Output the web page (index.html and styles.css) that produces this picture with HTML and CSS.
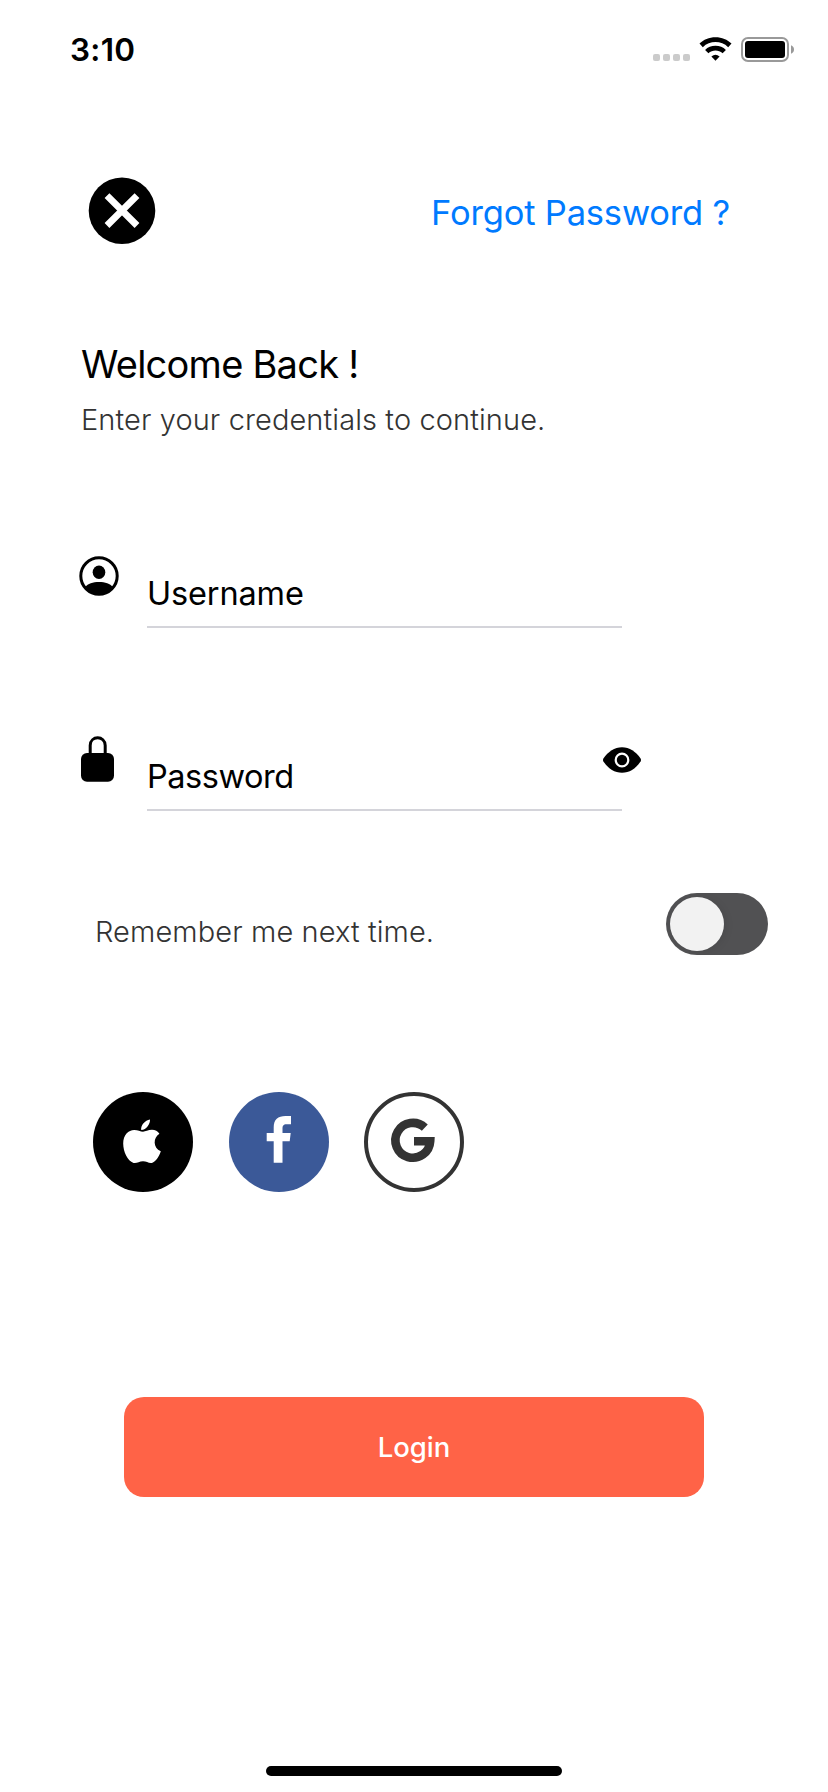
FILE: index.html
```html
<!DOCTYPE html>
<html lang="en">
<head>
<meta charset="utf-8">
<title>Login</title>
<link rel="stylesheet" href="styles.css">
</head>
<body>
<main class="screen">
  <header class="status">
    <span class="time">3:10</span>
    <svg class="status-icons" width="142" height="28" viewBox="0 0 142 28">
      <g fill="#cbcbcb"><rect y="18" width="7" height="7" rx="2"/><rect x="10" y="18" width="7" height="7" rx="2"/><rect x="20" y="18" width="7" height="7" rx="2"/><rect x="30" y="18" width="7" height="7" rx="2"/></g>
      <path d="M62.5 24.7L58.4 20.6Q62.5 17 66.6 20.6Z"/>
      <path d="M62.5 9.8C66.600 9.800 70.200 11.300 72.900 13.900L69.600 17.200C65.600 13.600 59.400 13.600 55.400 17.200L52.100 13.900C54.800 11.300 58.400 9.800 62.500 9.800Z"/>
      <path d="M62.500 1.200C68.900 1.200 74.400 3.600 78.500 7.600L75.200 11.200C68.200 4.400 56.800 4.400 49.800 11.200L46.500 7.600C50.600 3.600 56.100 1.200 62.500 1.200Z"/>
      <rect x="89" y="2" width="46" height="23" rx="6" fill="none" stroke="#999" stroke-width="2"/>
      <rect x="92" y="5" width="40" height="17" rx="3"/>
      <path d="M138 9.300Q141 10.500 141 13.500T138 17.700Z" fill="#999"/>
    </svg>
  </header>

  <nav class="topbar">
    <svg width="68" height="68" viewBox="0 0 68 68"><circle cx="34" cy="33.700" r="33.300"/><path d="M19 18.700L49 48.500M49 18.700L19 48.500" stroke="#fff" stroke-width="6.800"/></svg>
    <a class="forgot">Forgot Password ?</a>
  </nav>

  <section class="intro">
    <h1 class="title">Welcome Back !</h1>
    <p class="subtitle">Enter your credentials to continue.</p>
  </section>

  <form class="form">
    <div class="field">
      <svg class="user-icon" width="40" height="40" viewBox="0 0 40 40"><circle cx="20" cy="20" r="18.200" fill="none" stroke="#000" stroke-width="3"/><ellipse cx="20" cy="16.200" rx="6.300" ry="6.800"/><path d="M6.500 30.800C8.500 28 14 26 20 26S31.500 28 33.500 30.800C31 35 25.500 38.500 20 38.500S9 35 6.500 30.800Z"/></svg>
      <label class="input username">Username</label>
    </div>
    <div class="field">
      <svg class="lock-icon" width="34" height="47" viewBox="0 0 34 47"><rect y="17" width="33" height="28.700" rx="6"/><path d="M9.200 18V9.500C9.200 -.7 24.200 -.7 24.200 9.500V18" fill="none" stroke="#000" stroke-width="3"/></svg>
      <label class="input password">Password</label>
      <svg class="eye" width="38" height="26" viewBox="0 0 38 26"><path d="M.4 11.500C5.200 4.500 11.500.2 19 .2S32.800 4.500 37.600 11.500Q38.400 13 37.600 14.400C32.800 21.500 26.500 25.800 19 25.800S5.200 21.500.4 14.400Q-.4 13 .4 11.500Z"/><circle cx="19" cy="13" r="6.300" fill="none" stroke="#fff" stroke-width="2.200"/></svg>
    </div>
    <div class="remember">
      <span class="remember-text">Remember me next time.</span>
      <span class="toggle"><span class="knob"></span></span>
    </div>
  </form>

  <section class="socials">
    <span class="social apple"><svg width="100" height="100" viewBox="0 0 100 100"><path fill="#fff" d="M57 27.500C57.400 31.500 53.500 38 48.200 38C47.600 33 52 28.500 57 27.500ZM50 39.700C52.500 39.700 55 37.800 59 37.800C62.200 37.800 64.800 39.400 66.400 41.700C60 45.500 59.800 56 67.800 59.200C66.500 63.500 63 69.500 59.400 70.700C56 71.700 53.800 69.200 50 69.200C46 69.200 43.800 71.700 40.500 70.900C34.500 69 30.200 59.500 30.200 51.500C30.200 43 35.400 38 41.200 38C44.800 38 47.500 39.700 50 39.700Z"/></svg></span>
    <span class="social facebook"><svg width="100" height="100" viewBox="0 0 100 100"><path fill="#fff" d="M44.700 70.700V49.200H37.700V41H44.700V35.500C44.700 27.500 49 24 56.500 24H62V32.200H57.500C54.300 32.200 53.500 33.800 53.500 36.700V41H61.700L60.700 49.200H53.500V70.700Z"/></svg></span>
    <span class="social google"><svg width="100" height="100" viewBox="0 0 100 100"><circle cx="50" cy="50" r="48" fill="none" stroke="#333" stroke-width="4"/><path d="M60.800 35.700A17.400 17.400 0 1 0 66.200 49.200H50" fill="none" stroke="#333" stroke-width="8.600"/></svg></span>
  </section>

  <button class="login">Login</button>
  <div class="home-bar"></div>
</main>
</body>
</html>
```

FILE: styles.css
```css
* { box-sizing: border-box; }
body { margin: 0; background: #fff; color: #000; font-family: Inter, "Liberation Sans", sans-serif; }
.screen { width: 828px; height: 1792px; display: flex; flex-direction: column; overflow: hidden; }
.screen > * { flex: none; }
.status { height: 100px; display: flex; justify-content: space-between; align-items: flex-start; padding: 30px 33px 0 70px; }
.time { font-size: 31.500px; line-height: 40px; font-weight: 600; letter-spacing: .3px; }
.status-icons { margin-top: 6px; }
.topbar { height: 68px; margin-top: 77px; padding: 0 98px 0 88px; display: flex; justify-content: space-between; align-items: center; }
.forgot { color: #007aff; font-size: 34.500px; line-height: 48px; padding-top: 3px; letter-spacing: -.18px; white-space: nowrap; }
.intro { margin: 95px 0 0 82px; height: 110px; }
.title { margin: 0 0 0 -1px; font-size: 38px; line-height: 48px; font-weight: 400; letter-spacing: -.75px; white-space: nowrap; }
.subtitle { margin: 14px 0 0 -1px; color: #333; font-size: 29px; line-height: 36px; font-weight: 300; letter-spacing: .1px; white-space: nowrap; }
.form { margin-top: 98px; height: 407px; display: flex; flex-direction: column; }
.field { height: 80px; display: flex; align-items: flex-start; }
.field + .field { margin-top: 103px; }
.user-icon { margin: 8px 28px 0 79px; }
.lock-icon { margin: 5px 32px 0 81px; }
.input { width: 475px; height: 80px; padding-top: 26px; border-bottom: 2px solid #d4d4da; font-size: 32.500px; line-height: 40px; }
.username { letter-spacing: -.15px; }
.password { letter-spacing: -.45px; }
.eye { margin: 16px 0 0 -19px; }
.remember { height: 62px; margin: 82px 60px 0 95px; display: flex; justify-content: space-between; align-items: flex-start; }
.remember-text { color: #333; font-size: 29px; line-height: 40px; margin-top: 19px; font-weight: 300; letter-spacing: .1px; white-space: nowrap; }
.toggle { width: 102px; height: 62px; border-radius: 31px; background: #515153; padding: 4px; }
.knob { display: block; width: 54px; height: 54px; border-radius: 50%; background: #f2f2f2; box-shadow: 2px 1px 8px rgba(0,0,0,.08); }
.socials { margin: 137px 0 0 93px; height: 100px; display: flex; }
.social { width: 100px; height: 100px; border-radius: 50%; }
.social svg { display: block; }
.apple { background: #000; }
.facebook { background: #3b5998; margin-left: 36px; }
.google { margin-left: 35px; }
.login { margin: 205px 124px 0; height: 100px; border: 0; border-radius: 20px; background: #ff6347; color: #fff; font: 500 27.500px/40px Inter, "Liberation Sans", sans-serif; }
.home-bar { width: 296px; height: 10px; border-radius: 5px; margin: 269px auto 0; background: #000; }
```
